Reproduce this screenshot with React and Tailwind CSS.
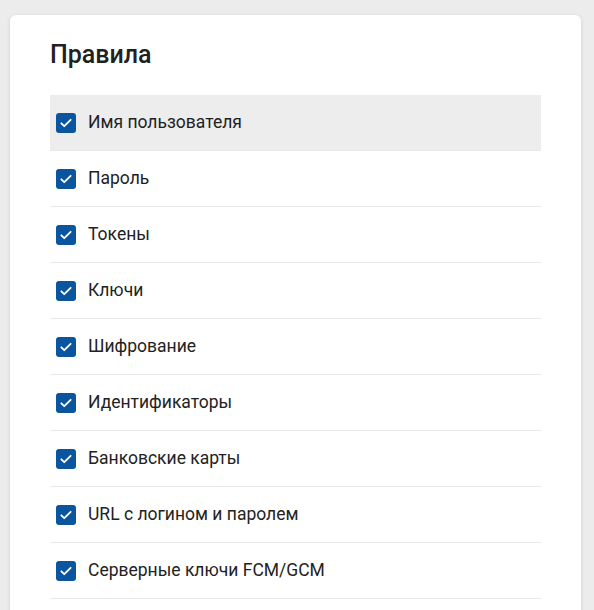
import React from "react";

const rules = [
  "Имя пользователя",
  "Пароль",
  "Токены",
  "Ключи",
  "Шифрование",
  "Идентификаторы",
  "Банковские карты",
  "URL с логином и паролем",
  "Серверные ключи FCM/GCM",
];

function CheckBox() {
  return (
    <span className="flex h-5 w-5 shrink-0 items-center justify-center rounded-[3px] bg-[#0b559f]">
      <svg width="14" height="14" viewBox="0 0 24 24" fill="none" stroke="white" strokeWidth="3" strokeLinecap="round" strokeLinejoin="round">
        <path d="M4 12.5l5 5L20 6.5" />
      </svg>
    </span>
  );
}

export default function App() {
  return (
    <div className="min-h-[610px] bg-[#ececec] pl-[10px] pr-[13px] pt-[15px] font-['Roboto',sans-serif]">
      <div className="rounded-md bg-white pl-10 pr-10 pt-[26px] pb-6 shadow-[0_1px_4px_rgba(0,0,0,0.12)]">
        <h2 className="text-[25px] font-medium leading-7 text-[#212121]">Правила</h2>
        <ul className="mt-[26px]">
          {rules.map((r, i) => (
            <li
              key={r}
              className={`flex h-[56px] items-center gap-3 border-b border-[#e8e8e8] pl-[6px] ${i === 0 ? "bg-[#ededed]" : ""}`}
            >
              <CheckBox />
              <span className="text-[17.5px] text-[#222]">{r}</span>
            </li>
          ))}
        </ul>
      </div>
    </div>
  );
}
